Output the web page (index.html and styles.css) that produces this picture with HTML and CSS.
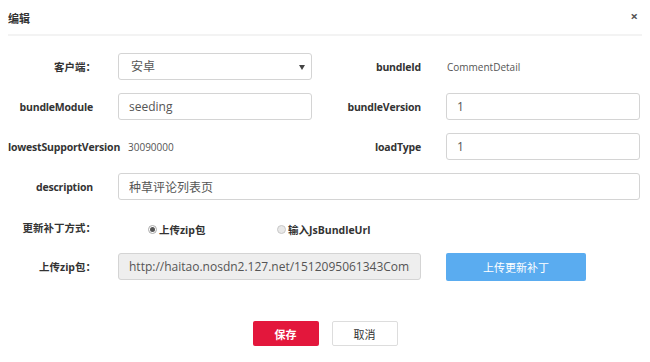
FILE: index.html
```html
<!DOCTYPE html>
<html lang="zh-CN">
<head>
    <meta charset="UTF-8">
    <meta name="viewport" content="width=device-width, initial-scale=1.0">
    <title>编辑</title>
    <link rel="stylesheet" href="styles.css">
</head>
<body>
    <div class="modal">
        <div class="modal-head">
            <span class="modal-title">编辑</span>
            <span class="close">&times;</span>
        </div>

        <form class="edit-form">
            <label class="lbl lbl-cn">客户端：</label>
            <div class="select-wrap">
                <select class="field">
                    <option>安卓</option>
                    <option>iOS</option>
                </select>
                <span class="caret"></span>
            </div>
            <label class="lbl">bundleId</label>
            <div class="plain">CommentDetail</div>

            <label class="lbl">bundleModule</label>
            <input type="text" class="field" value="seeding">
            <label class="lbl">bundleVersion</label>
            <input type="text" class="field" value="1">

            <label class="lbl lbl-wide">lowestSupportVersion</label>
            <div class="plain plain-pushed">30090000</div>
            <label class="lbl">loadType</label>
            <input type="text" class="field" value="1">

            <label class="lbl">description</label>
            <input type="text" class="field span3" value="种草评论列表页">

            <label class="lbl lbl-cn lbl-radio">更新补丁方式：</label>
            <div class="radios span3">
                <span class="radio checked"><i></i>上传zip包</span>
                <span class="radio"><i></i>输入JsBundleUrl</span>
            </div>

            <label class="lbl lbl-cn">上传zip包：</label>
            <input type="text" class="field field-off span2" value="http://haitao.nosdn2.127.net/1512095061343CommentDetail.zip" disabled>
            <div class="upload-cell">
                <button type="button" class="btn-upload">上传更新补丁</button>
            </div>
        </form>

        <div class="actions">
            <button type="button" class="btn-save">保存</button>
            <button type="button" class="btn-cancel">取消</button>
        </div>
    </div>
</body>
</html>
```

FILE: styles.css
```css
body {
    margin: 0;
    background: #fff;
    font-family: "Open Sans", "Noto Sans CJK SC", sans-serif;
    color: #333;
}
.modal {
    padding: 0 8px;
}
.modal-head {
    display: flex;
    justify-content: space-between;
    align-items: center;
    height: 34px;
    border-bottom: 2px solid #f3f3f3;
}
.modal-title {
    font-size: 11px;
    font-weight: 700;
    padding-top: 1px;
}
.close {
    font-size: 13px;
    font-weight: 700;
    color: #555;
    margin-right: 4px;
    margin-top: -2px;
}

.edit-form {
    display: grid;
    grid-template-columns: 110px 194px 134px 194px;
    grid-auto-rows: 27px;
    row-gap: 13px;
    padding-top: 17px;
    align-items: center;
}
.lbl {
    font-size: 10.5px;
    letter-spacing: -0.2px;
    font-weight: 700;
    text-align: right;
    padding-right: 25px;
    white-space: nowrap;
    color: #333;
}
.lbl-cn {
    font-size: 10.5px;
    letter-spacing: 0;
    padding-right: 22px;
}
.lbl-wide {
    text-align: left;
    padding-right: 0;
}
.lbl-radio {
    align-self: start;
    padding-top: 7px;
}
.plain {
    font-size: 10px;
    color: #555;
    padding-left: 1px;
}
.plain-pushed {
    padding-left: 10px;
}
.field {
    box-sizing: border-box;
    width: 100%;
    height: 27px;
    border: 1px solid #d4d4d4;
    border-radius: 3px;
    background: #fff;
    padding: 0 10px;
    font-family: "Open Sans", "Noto Sans CJK SC", sans-serif;
    font-size: 12px;
    color: #555;
    outline: none;
}
.field-off {
    background: #eee;
    color: #555;
    -webkit-text-fill-color: #555;
    opacity: 1;
}
.span2 {
    grid-column: span 2;
    width: 303px;
}
.span3 {
    grid-column: span 3;
}
.select-wrap {
    position: relative;
    height: 27px;
}
select.field {
    -webkit-appearance: none;
    appearance: none;
    padding-left: 12px;
}
.caret {
    position: absolute;
    right: 7px;
    top: 12px;
    width: 0;
    height: 0;
    border-left: 3px solid transparent;
    border-right: 3px solid transparent;
    border-top: 5px solid #444;
}

.radios {
    display: flex;
    align-items: center;
    padding-left: 30px;
    height: 23px;
    align-self: start;
    padding-top: 5px;
}
.radio {
    display: flex;
    align-items: center;
    width: 129px;
    font-size: 10.5px;
    font-weight: 700;
    color: #333;
}
.radio i {
    box-sizing: border-box;
    width: 9px;
    height: 9px;
    border-radius: 50%;
    border: 1px solid #c8c8c8;
    background: #e8e8e8;
    margin-right: 2px;
    position: relative;
}
.radio.checked i {
    background: #fff;
    border-color: #aaa;
}
.radio.checked i::after {
    content: "";
    position: absolute;
    left: 1px;
    top: 1px;
    width: 5px;
    height: 5px;
    border-radius: 50%;
    background: #555;
}

.btn-upload {
    width: 140px;
    height: 28px;
    border: none;
    border-radius: 2px;
    background: #5aacf0;
    color: #fff;
    font-family: "Open Sans", "Noto Sans CJK SC", sans-serif;
    font-size: 11px;
}

.actions {
    display: flex;
    justify-content: center;
    gap: 13px;
    padding-top: 41px;
}
.btn-save,
.btn-cancel {
    width: 66px;
    height: 25px;
    border-radius: 2px;
    font-family: "Open Sans", "Noto Sans CJK SC", sans-serif;
    font-size: 11px;
}
.btn-save {
    border: none;
    background: #e3173c;
    color: #fff;
    font-weight: 700;
}
.btn-cancel {
    border: 1px solid #ddd;
    background: #fff;
    color: #333;
}
```
